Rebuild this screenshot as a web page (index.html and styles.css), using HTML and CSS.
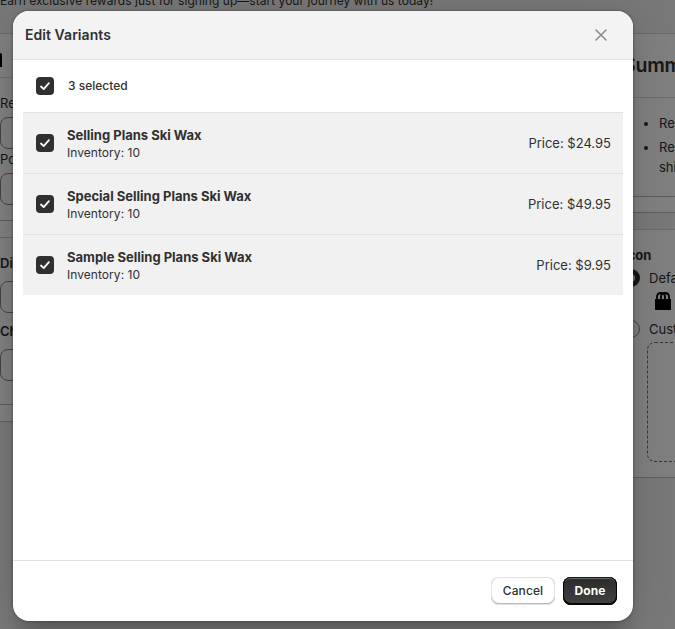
FILE: index.html
```html
<!DOCTYPE html>
<html lang="en">
<head>
<meta charset="utf-8">
<title>Edit Variants</title>
<link rel="stylesheet" href="styles.css">
</head>
<body>
<div class="page">
  <p class="banner">Earn exclusive rewards just for signing up—start your journey with us today!</p>
  <div class="columns">
    <div class="main">
      <section class="card">
        <div class="card-head"><span class="head-mark"></span></div>
        <div class="fields">
          <label>Re</label><div class="field"></div>
          <label>Po</label><div class="field"></div>
        </div>
        <div class="card-foot"></div>
        <div class="fields strong">
          <label>Di</label><div class="field"></div>
          <label>Ch</label><div class="field"></div>
        </div>
        <div class="card-foot"></div>
      </section>
    </div>
    <aside class="side">
      <section class="card">
        <h2 class="summary-title">Summ</h2>
        <ul class="summary-list"><li>Re</li><li>Re<br>shi</li></ul>
        <div class="card-foot"></div>
      </section>
      <section class="card icon-card">
        <h3>Icon</h3>
        <div class="option"><span class="radio on"></span>Default</div>
        <svg class="bag" width="16" height="20" viewBox="0 0 16 20"><path d="M0 8h16v11H0z"/><path d="M2 9V6q0-4 4-4t4 4v3M6 9V6q0-4 4-4t4 4v3" fill="none" stroke="#000" stroke-width="1.8"/></svg>
        <div class="option"><span class="radio"></span>Custom</div>
        <div class="dropzone"></div>
      </section>
    </aside>
  </div>
</div>
<div class="backdrop"></div>
<div class="modal" role="dialog">
  <header class="modal-head">
    <h1>Edit Variants</h1>
    <svg width="12" height="12" viewBox="0 0 12 12"><path d="M1 1l10 10M11 1L1 11" fill="none" stroke="#8a8a8a" stroke-width="1.5" stroke-linecap="round"/></svg>
  </header>
  <div class="modal-body">
    <div class="selected"><span class="check"><svg viewBox="0 0 18 18"><path d="M5 9.5l2.7 2.6 5.2-6"/></svg></span>3 selected</div>
    <div class="rows">
      <div class="row"><span class="check"><svg viewBox="0 0 18 18"><path d="M5 9.5l2.7 2.6 5.2-6"/></svg></span><div class="info"><strong>Selling Plans Ski Wax</strong><span>Inventory: 10</span></div><span class="price">Price: $24.95</span></div>
      <div class="row"><span class="check"><svg viewBox="0 0 18 18"><path d="M5 9.5l2.7 2.6 5.2-6"/></svg></span><div class="info"><strong>Special Selling Plans Ski Wax</strong><span>Inventory: 10</span></div><span class="price">Price: $49.95</span></div>
      <div class="row"><span class="check"><svg viewBox="0 0 18 18"><path d="M5 9.5l2.7 2.6 5.2-6"/></svg></span><div class="info"><strong>Sample Selling Plans Ski Wax</strong><span>Inventory: 10</span></div><span class="price">Price: $9.95</span></div>
    </div>
  </div>
  <footer class="modal-foot"><button class="btn">Cancel</button><button class="btn primary">Done</button></footer>
</div>
</body>
</html>
```

FILE: styles.css
```css
* { box-sizing: border-box; }
html, body { height: 100%; overflow: hidden; }
body { margin: 0; font: 13px/20px Inter, "Liberation Sans", sans-serif; color: #303030; background: #f1f1f1; }
h1, h2, h3, p, ul { margin: 0; padding: 0; }

.page { height: 629px; overflow: hidden; }
.banner { height: 33px; margin-top: -9px; margin-bottom: 9px; font-size: 12px; letter-spacing: 0.035px; white-space: nowrap; }
.columns { display: grid; grid-template-columns: 594px 300px; align-items: start; gap: 16px; }
.main, .side { display: flex; flex-direction: column; gap: 16px; }
.card { background: #fff; border-top: 1px solid #d5d5d5; border-bottom: 1px solid #bcbcbc; }
.card-head { height: 44px; padding-top: 19px; border-bottom: 1px solid #dcdcdc; }
.head-mark { display: block; width: 2px; height: 14px; background: #000; border-top-right-radius: 2px; }
.fields { height: 142px; padding-top: 15px; }
.fields label { display: block; height: 24px; }
.field { width: 560px; height: 32px; border: 1px solid #8a8a8a; border-radius: 8px; background: #fdfdfd; }
.fields .field + label { height: 24px; }
.fields.strong { height: 167px; padding-top: 15px; font-weight: 600; border-top: 1px solid #cfcfcf; }
.fields.strong label { height: 28px; }
.fields.strong .field + label { height: 36px; padding-top: 8px; }
.card-foot { height: 17px; border-top: 1px solid #bcbcbc; }
.side .card-foot { height: 16px; }

.summary-title { height: 64px; padding: 17px 13px; font-size: 19.5px; line-height: 28px; font-weight: 600; letter-spacing: -0.2px; border-bottom: 1px solid #dcdcdc; }
.summary-list { height: 98px; padding: 15px 16px 0 49px; }
.summary-list li { margin-bottom: 4px; }
.icon-card { height: 249px; padding: 15px 16px 0 12px; }
.icon-card h3 { padding-left: 2px; font-size: 13px; line-height: 20px; font-weight: 650; }
.option { display: flex; align-items: center; gap: 9px; height: 26px; }
.radio { width: 18px; height: 18px; border: 1px solid #8a8a8a; border-radius: 50%; }
.radio.on { border: 5px solid #303030; }
.bag { display: block; margin: 0 0 5px 33px; }
.dropzone { width: 230px; height: 120px; margin-left: 25px; border: 1px dashed #6a6a6a; border-radius: 8px; }

.backdrop { position: absolute; inset: 0; background: rgba(0, 0, 0, .5); }
.modal { position: absolute; left: 13px; top: 11px; width: 620px; height: 610px; display: flex; flex-direction: column; overflow: hidden; border-radius: 16px; background: #fff; box-shadow: 0 20px 20px -8px rgba(26, 26, 26, .28), 0 0 3px rgba(0, 0, 0, .4), 0 2px 40px rgba(0, 0, 0, .12); }
.modal-head { height: 49px; padding: 0 26px 0 12px; display: flex; align-items: center; justify-content: space-between; background: #f3f3f3; border-bottom: 1px solid #e3e3e3; }
.modal-head h1 { font-size: 14px; line-height: 20px; font-weight: 580; letter-spacing: 0.05px; }
.modal-body { flex: 1; }
.selected { height: 52px; padding-left: 23px; display: flex; align-items: center; gap: 14px; font-size: 12px; font-weight: 500; }
.check { flex: none; width: 18px; height: 18px; border-radius: 4px; background: #303030; }
.check svg { display: block; width: 18px; height: 18px; fill: none; stroke: #fff; stroke-width: 1.8; stroke-linecap: round; stroke-linejoin: round; }
.rows { margin: 0 10px; border-top: 1px solid #e1e1e1; }
.row { height: 61px; padding: 0 12px 0 13px; display: flex; align-items: center; gap: 13px; background: #f1f1f1; border-bottom: 1px solid #e1e1e1; }
.row:last-child { height: 60px; border-bottom: 0; }
.info { flex: 1; display: flex; flex-direction: column; }
.info strong { line-height: 19px; font-weight: 650; }
.info span { font-size: 12px; line-height: 16px; letter-spacing: 0.05px; }
.row .check, .price { margin-bottom: 1px; }
.modal-foot { height: 61px; padding: 16px; display: flex; gap: 8px; justify-content: flex-end; border-top: 1px solid #e3e3e3; }
.btn { height: 28px; width: 64px; padding: 0; border: 0; border-radius: 8px; background: #fff; font: 550 12px/16px Inter, "Liberation Sans", sans-serif; letter-spacing: 0.1px; color: #303030; box-shadow: inset 0 0 0 1px #e3e3e3, inset 0 -1px 0 1px #b8b8b8; }
.btn.primary { width: 54px; color: #fff; font-weight: 700; background: linear-gradient(#2b2b2b, #424242); box-shadow: inset 0 -1px 0 1px #050505, inset 0 0 0 1px #1a1a1a, inset 0 2px 0 #666; }
```
